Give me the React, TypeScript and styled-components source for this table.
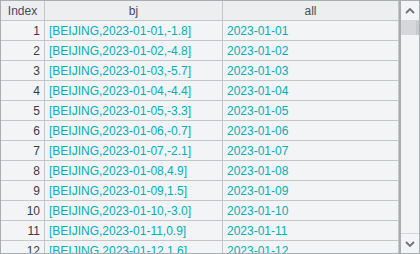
import { Fragment } from 'react';
import styled, { createGlobalStyle } from 'styled-components';

const GlobalStyle = createGlobalStyle`
  html, body {
    margin: 0;
    padding: 0;
    background: #ffffff;
  }
  body {
    font-family: "Liberation Sans", Arial, sans-serif;
    font-size: 12px;
  }
`;

const Frame = styled.div`
  width: 420px;
  height: 254px;
  box-sizing: border-box;
  border: 1px solid #a9adb2;
  display: flex;
  overflow: hidden;
  background: #f3f4f5;
`;

const Grid = styled.div`
  flex: 1;
  display: grid;
  grid-template-columns: 44px 178px 1fr;
  grid-auto-rows: 20px;
  overflow: hidden;
  border-right: 2px solid #a9adb2;
`;

const Cell = styled.div<{ $align?: 'left' | 'right' | 'center'; $head?: boolean; $kind?: 'index' | 'data' }>`
  box-sizing: border-box;
  border-right: 1px solid #c3c7cb;
  border-bottom: 1px solid #c3c7cb;
  padding: 0 4px;
  display: flex;
  align-items: center;
  justify-content: ${p => (p.$align === 'right' ? 'flex-end' : p.$align === 'center' ? 'center' : 'flex-start')};
  white-space: nowrap;
  overflow: hidden;
  background: ${p => (p.$head ? '#eceef0' : '#f3f4f5')};
  color: ${p => (p.$head ? '#4a4a5e' : p.$kind === 'index' ? '#3a3a48' : '#00b0b8')};
  line-height: 20px;
`;

const ScrollBar = styled.div`
  width: 18px;
  display: flex;
  flex-direction: column;
  background: #f3f4f5;
`;

const ScrollButton = styled.div`
  height: 19px;
  display: flex;
  align-items: center;
  justify-content: center;
  background: #f3f4f5;
  border-bottom: 1px solid #d4d6d9;
  &:last-child {
    border-bottom: none;
    border-top: 1px solid #d4d6d9;
  }
`;

const Track = styled.div`
  flex: 1;
  display: flex;
  flex-direction: column;
  background: #f3f4f5;
`;

const Thumb = styled.div`
  height: 14px;
  background: #d5d7da;
  border-right: 3px solid #c8cacd;
`;

const Arrow = ({ down }: { down?: boolean }) => (
  <svg width="10" height="6" viewBox="0 0 10 6">
    <path
      d={down ? 'M1 1 L5 5 L9 1' : 'M1 5 L5 1 L9 5'}
      fill="none"
      stroke="#6f7277"
      strokeWidth="1.8"
    />
  </svg>
);

const temps = ['-1.8', '-4.8', '-5.7', '-4.4', '-3.3', '-0.7', '-2.1', '4.9', '1.5', '-3.0', '0.9', '1.6'];

const rows = temps.map((t, i) => {
  const day = String(i + 1).padStart(2, '0');
  const date = `2023-01-${day}`;
  return { index: i + 1, bj: `[BEIJING,${date},${t}]`, all: date };
});

export default function App() {
  return (
    <>
      <GlobalStyle />
      <Frame>
        <Grid>
          <Cell $head $align="center">Index</Cell>
          <Cell $head $align="center">bj</Cell>
          <Cell $head $align="center">all</Cell>
          {rows.map(r => (
            <Fragment key={r.index}>
              <Cell $align="right" $kind="index">{r.index}</Cell>
              <Cell $kind="data">{r.bj}</Cell>
              <Cell $kind="data">{r.all}</Cell>
            </Fragment>
          ))}
        </Grid>
        <ScrollBar>
          <ScrollButton><Arrow /></ScrollButton>
          <Track><Thumb /></Track>
          <ScrollButton><Arrow down /></ScrollButton>
        </ScrollBar>
      </Frame>
    </>
  );
}
